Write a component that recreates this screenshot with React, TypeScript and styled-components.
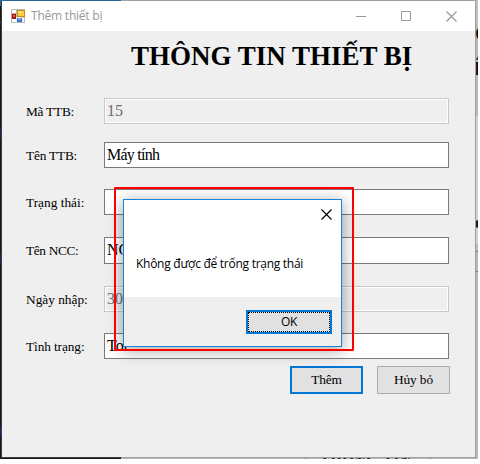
import React from 'react';
import styled, { createGlobalStyle } from 'styled-components';

const GlobalStyle = createGlobalStyle`
  * { box-sizing: border-box; }
  body { margin: 0; background: #fff; overflow: hidden; }
`;

const Desktop = styled.div`
  position: relative;
  width: 478px;
  height: 459px;
  padding: 0 0 1px 1px;
  overflow: hidden;
  background: linear-gradient(90deg, #18191c 0 121px, #b7b7b7 121px);
`;

const Speck = styled.i<{ $x: number; $y: number; $w: number; $h: number; $c: string }>`
  position: absolute;
  left: ${(p) => p.$x}px;
  top: ${(p) => p.$y}px;
  width: ${(p) => p.$w}px;
  height: ${(p) => p.$h}px;
  background: ${(p) => p.$c};
`;

const Knob = styled.i`
  position: absolute;
  left: 475px;
  top: 220px;
  width: 8px;
  height: 8px;
  border-radius: 4px;
  background: #1c1c1c;
`;

const Behind = styled.span<{ $x: number; $y: number; $size: number; $ls?: number }>`
  position: absolute;
  left: ${(p) => p.$x}px;
  top: ${(p) => p.$y}px;
  font: bold ${(p) => p.$size}px/1 'Liberation Serif', serif;
  letter-spacing: ${(p) => p.$ls ?? 0}px;
  color: #111;
  white-space: nowrap;
`;

const Window = styled.main`
  position: relative;
  width: 475px;
  height: 458px;
  display: flex;
  flex-direction: column;
  background: #efefef;
  border: 1px solid #a0a0a0;
  border-left-color: #3c3c3e;
`;

const WindowEdge = styled.i<{ $top: string; $color: string }>`
  position: absolute;
  left: 1px;
  top: ${(p) => p.$top};
  width: 120px;
  height: 1px;
  background: ${(p) => p.$color};
`;

const TitleBar = styled.header`
  height: 30px;
  flex: none;
  display: flex;
  align-items: center;
  padding-left: 9px;
  background: #fff;
`;

const Caption = styled.span`
  flex: 1;
  margin-left: 6px;
  font: 12px/16px 'Open Sans', sans-serif;
  letter-spacing: -0.22px;
  color: #999;
  white-space: nowrap;
`;

const WindowButton = styled.button<{ $w?: number }>`
  width: ${(p) => p.$w ?? 45}px;
  height: 30px;
  padding: 0;
  border: 0;
  background: none;
  display: flex;
  align-items: center;
  justify-content: center;
`;

const Heading = styled.h1`
  margin: 7px 0 0 129px;
  height: 36px;
  font: bold 27px/36px 'Liberation Serif', serif;
  color: #000;
  white-space: nowrap;
`;

const Row = styled.label<{ $gap: number; $h?: number }>`
  display: flex;
  align-items: center;
  height: ${(p) => p.$h ?? 26}px;
  margin: ${(p) => p.$gap}px 0 0 24px;
`;

const Name = styled.span<{ $ls?: number }>`
  width: 78px;
  font: 13.33px/16px 'Liberation Serif', serif;
  letter-spacing: ${(p) => p.$ls ?? 0}px;
  color: #000;
  padding-top: 1px;
  white-space: nowrap;
`;

const Field = styled.div<{ $off?: boolean; $ls?: number }>`
  width: 345px;
  height: 100%;
  padding: 2px;
  overflow: hidden;
  border: 1px solid ${(p) => (p.$off ? '#c8c8c8' : '#7a7a7a')};
  background: ${(p) => (p.$off ? '#efefef' : '#fff')};
  box-shadow: ${(p) => (p.$off ? 'inset 0 0 0 1px #fff' : 'none')};
  color: ${(p) => (p.$off ? '#6d6d6d' : '#000')};
  font: 16px/20px 'Liberation Serif', serif;
  letter-spacing: ${(p) => p.$ls ?? 0}px;
  white-space: nowrap;
`;

const Actions = styled.div`
  display: flex;
  gap: 14px;
  margin: 7px 0 0 288px;
`;

const FormButton = styled.button<{ $primary?: boolean }>`
  width: 73px;
  height: 28px;
  padding: 0;
  border: ${(p) => (p.$primary ? '2px solid #0078d7' : '1px solid #adadad')};
  background: #e1e1e1;
  font: 13.33px/16px 'Liberation Serif', serif;
  letter-spacing: -0.1px;
  color: #000;
`;

const Dialog = styled.section`
  position: absolute;
  left: 123px;
  top: 199px;
  width: 219px;
  height: 148px;
  display: flex;
  flex-direction: column;
  background: #fff;
  border: 1px solid #1883d7;
  box-shadow: 0 3px 14px 1px rgba(0, 0, 0, 0.34);
`;

const DialogTop = styled.div`
  height: 30px;
  display: flex;
  justify-content: flex-end;
  padding: 9px 9px 0 0;
`;

const Message = styled.p`
  flex: 1;
  margin: 0;
  padding: 26px 0 0 12px;
  font: 12px/16px 'Open Sans', sans-serif;
  letter-spacing: -0.27px;
  color: #000;
  white-space: nowrap;
`;

const DialogFooter = styled.footer`
  height: 49px;
  display: flex;
  justify-content: flex-end;
  align-items: flex-start;
  padding: 13px 9px 0 0;
  background: #efefef;
`;

const OkButton = styled.button`
  width: 86px;
  height: 24px;
  padding: 0;
  display: flex;
  border: 2px solid #0078d7;
  background: #e1e1e1;
`;

const FocusRing = styled.span`
  flex: 1;
  height: 20px;
  border: 1px dotted #000;
  font: 12px/18px 'Open Sans', sans-serif;
  letter-spacing: -0.4px;
  color: #000;
`;

const RedFrame = styled.div`
  position: absolute;
  left: 114px;
  top: 187px;
  width: 240px;
  height: 164px;
  border: 2px solid #f00;
  border-radius: 1px;
`;

const AppIcon = () => (
  <svg width="14" height="14" viewBox="0 0 14 14" shapeRendering="crispEdges">
    <rect width="14" height="14" fill="#b9b9b9" />
    <path d="M1 1h4v3H1zM1 10h4v3H1zM12 9h1v4h-1z" fill="#fff" />
    <rect y="4" width="5" height="6" fill="#c9a3a0" />
    <rect x="1" y="5" width="4" height="5" fill="#9b1616" />
    <rect x="2" y="6" width="2" height="2" fill="#e4573e" />
    <rect x="6" y="1" width="8" height="7" fill="#c98a08" />
    <rect x="7" y="2" width="6" height="5" fill="#ffcf3d" />
    <rect x="7" y="2" width="3" height="2" fill="#ffe58a" />
    <rect x="5" y="8" width="7" height="5" fill="#e6ecf8" />
    <rect x="6" y="9" width="5" height="4" fill="#3b6fce" />
    <rect x="7" y="9" width="3" height="2" fill="#82abee" />
  </svg>
);

const Cross = ({ color }: { color: string }) => (
  <svg width="11" height="11" viewBox="0 0 11 11">
    <path d="M.5.5l10 10M10.5.5l-10 10" stroke={color} strokeWidth="1.15" fill="none" />
  </svg>
);

const rows = [
  { name: 'Mã TTB:', value: '15', off: true, gap: 24, ls: -0.25 },
  { name: 'Tên TTB:', value: 'Máy tính', gap: 18, ls: -0.2, valueLs: -0.75 },
  { name: 'Trạng thái:', value: '', gap: 21 },
  { name: 'Tên NCC:', value: 'NCC', gap: 22, h: 27, ls: -0.35 },
  { name: 'Ngày nhập:', value: '30', off: true, gap: 22 },
  { name: 'Tình trạng:', value: 'Tot', gap: 21, ls: -0.1 },
];

const specks = [
  [0, 0, 2, 6, '#2a6796'], [0, 22, 1, 1, '#55565a'], [1, 80, 1, 2, '#777'], [0, 129, 2, 9, '#1d2363'],
  [0, 254, 2, 9, '#1d2363'], [0, 427, 2, 9, '#1d2363'], [1, 412, 1, 1, '#777'],
  [476, 0, 2, 25, '#c0c0c0'], [476, 116, 2, 128, '#d2d2d2'], [476, 251, 2, 1, '#777'], [476, 271, 2, 1, '#777'],
  [305, 458, 1, 1, '#777'], [430, 458, 1, 1, '#777'],
] as const;

export default function App() {
  return (
    <>
      <GlobalStyle />
      <Desktop>
        {specks.map(([x, y, w, h, c]) => (
          <Speck key={`${x}-${y}`} $x={x} $y={y} $w={w} $h={h} $c={c} />
        ))}
        <Behind $x={475} $y={17} $size={28}>c</Behind>
        <Behind $x={474} $y={52} $size={28}>í</Behind>
        <Knob />
        <Behind $x={320} $y={454} $size={14} $ls={1.3}>THÔNG TIN</Behind>
        <Window>
          <TitleBar>
            <AppIcon />
            <Caption>Thêm thiết bị</Caption>
            <WindowButton>
              <svg width="10" height="11"><path d="M0 5.5h10" stroke="#999" /></svg>
            </WindowButton>
            <WindowButton>
              <svg width="10" height="10"><path d="M.5.5h9v9h-9z" stroke="#999" fill="none" /></svg>
            </WindowButton>
            <WindowButton $w={47}><Cross color="#999" /></WindowButton>
          </TitleBar>
          <Heading>THÔNG TIN THIẾT BỊ</Heading>
          {rows.map((r) => (
            <Row key={r.name} $gap={r.gap} $h={r.h}>
              <Name $ls={r.ls}>{r.name}</Name>
              <Field $off={r.off} $ls={r.valueLs}>{r.value}</Field>
            </Row>
          ))}
          <Actions>
            <FormButton $primary>Thêm</FormButton>
            <FormButton>Hủy bỏ</FormButton>
          </Actions>
        </Window>
        <WindowEdge $top="0" $color="#2a6796" />
        <WindowEdge $top="457px" $color="#3c3c3e" />
        <Dialog>
          <DialogTop><Cross color="#000" /></DialogTop>
          <Message>Không được để trống trạng thái</Message>
          <DialogFooter>
            <OkButton><FocusRing>OK</FocusRing></OkButton>
          </DialogFooter>
        </Dialog>
        <RedFrame />
      </Desktop>
    </>
  );
}
